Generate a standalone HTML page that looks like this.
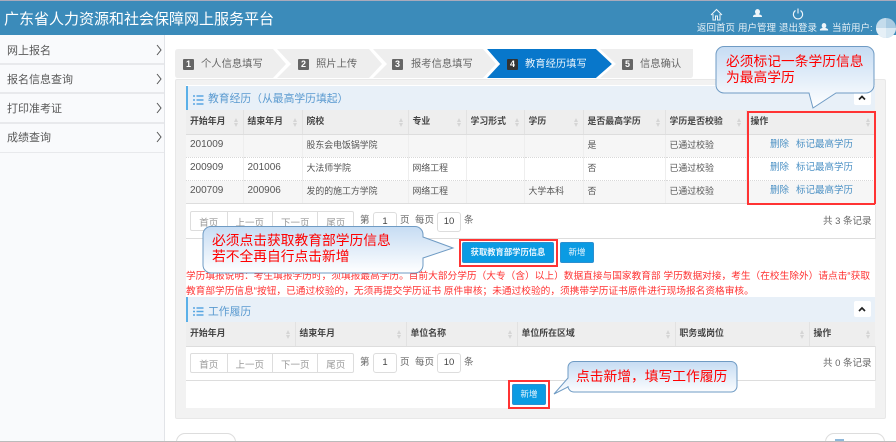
<!DOCTYPE html>
<html lang="zh-CN"><head><meta charset="utf-8"><title>广东省人力资源和社会保障网上服务平台</title>
<style>
*{box-sizing:border-box}
html,body{margin:0;padding:0;width:896px;height:442px;overflow:hidden;background:#fff}
body{position:relative;font-family:"Liberation Sans","Noto Sans CJK SC",sans-serif;color:#555}
.a{position:absolute;white-space:nowrap}
#wrap{position:absolute;left:0;top:0;width:896px;height:442px;overflow:hidden;filter:blur(.35px)}
.hd{left:0;top:1px;width:896px;height:34px;background:#3b8bba}
.ht{color:#e6f0f6;font-size:9.5px;line-height:12px;top:23px}
.side{left:0;top:35px;width:165px;height:407px;background:#f9fafc;border-right:1px solid #e2e4e8}
.sep{left:0;width:164px;background:#e8e9ec}
.si{left:7px;font-size:11px;line-height:14px;color:#585858}
.tx{font-size:10.3px;line-height:14px;color:#666;top:58px}
.bd{top:59px;width:11px;height:11px;background:#666;color:#fff;font-size:9px;font-weight:bold;line-height:11px;text-align:center;border-radius:1px}
.ph{background:#e8f0f8;border-left:2px solid #5bb0e8;left:186px;width:689px}
.pt{color:#5a9ad0;font-size:10.8px;line-height:14px;left:208px}
.col{left:854px;width:17px;height:16px;background:#fff;border-radius:2px}
table{position:absolute;left:186px;border-collapse:collapse;table-layout:fixed;font-size:8.9px;color:#555}
th{height:24px;background:#eee;text-align:left;padding:0 0 2px 4px;color:#444;font-weight:bold;border-right:1px solid #e2e2e2;border-bottom:1px solid #ddd;position:relative}
th:before,th:after{content:"";position:absolute;right:5px;border-left:2.5px solid transparent;border-right:2.5px solid transparent}
th:before{top:8px;border-bottom:4px solid #d5d5d5}
th:after{top:13px;border-top:4px solid #d5d5d5}
th:last-child{border-right:0}
td{height:23px;padding:0 0 2px 4px;border-right:1px solid #eee;border-bottom:1px dotted #d8d8d8;white-space:nowrap;overflow:hidden}
td:last-child{border-right:0}
tr.o td{background:#f6f6f6}
tr:last-child td{border-bottom:1px solid #ddd}
.n{font-size:10px;font-family:"Liberation Sans",sans-serif}
.lk{color:#4a90c4;font-size:9.5px;line-height:12px}
.pg{left:190px;width:164px;height:20px;border:1px solid #ddd;border-radius:2px;background:#fff;display:flex;font-size:9.5px;color:#999}
.pg span{display:block;text-align:center;line-height:21px;border-right:1px solid #ddd;padding-top:1px}
.pg span:last-child{border-right:0}
.pl{font-size:9.5px;line-height:12px;color:#666}
.in{width:24px;height:20px;border:1px solid #ddd;border-radius:3px;background:#fff;font-size:9.5px;color:#444;text-align:center;line-height:18px}
.hr{background:#ddd;height:1px;left:186px;width:689px}
.btn{background:#0b9be3;border:1px solid #2c8fd0;border-radius:2px;color:#eaf6fd;font-size:8.3px;line-height:19px;text-align:center;height:21px}
.rb{border:2px solid #f33}
.note{left:186px;color:#f33;font-size:9.7px;line-height:15px}
.cl{color:#f00;font-size:13.75px;line-height:16px}
svg{position:absolute;left:0;top:0}
</style></head><body><div id="wrap">

<div class="a" style="left:0;top:0;width:896px;height:1px;background:#aab"></div>
<div class="a hd"></div>
<div class="a" style="left:4px;top:10px;color:#fff;font-size:15px;line-height:20px">广东省人力资源和社会保障网上服务平台</div>

<div class="a ht" style="left:697px">返回首页</div>
<div class="a ht" style="left:738px">用户管理</div>
<div class="a ht" style="left:779px">退出登录</div>
<div class="a ht" style="left:832px">当前用户:</div>

<div class="a side"></div>
<div class="a sep" style="top:63px;height:2px"></div>
<div class="a sep" style="top:92px;height:2px"></div>
<div class="a sep" style="top:122px;height:2px"></div>
<div class="a sep" style="top:152px;height:1px"></div>
<div class="a si" style="top:44px">网上报名</div>
<div class="a si" style="top:73px">报名信息查询</div>
<div class="a si" style="top:102px">打印准考证</div>
<div class="a si" style="top:131px">成绩查询</div>

<div class="a" style="left:175px;top:79px;width:711px;height:340px;background:#f2f2f2;border:1px solid #e8e8e8;border-radius:2px"></div>
<div class="a" style="left:186px;top:85px;width:689px;height:323px;background:#fff"></div>

<div class="a" style="left:176px;top:433px;width:60px;height:12px;border:1px solid #ddd;border-radius:9px 9px 0 0;background:#fff"></div>
<div class="a" style="left:825px;top:433px;width:60px;height:12px;border:1px solid #ddd;border-radius:9px 9px 0 0;background:#fff"></div>
<div class="a" style="left:835px;top:439px;width:9px;height:2px;background:#8fb8da"></div>
<div class="a" style="left:0;top:441px;width:896px;height:1px;background:#bbb"></div>

<svg width="896" height="442" viewBox="0 0 896 442" style="z-index:1">
  <path d="M175 52q0-3 3-3H693v26q0 3-3 3H178q-3 0-3-3z" fill="#eee"/>
  <path d="M487 49H596L612 64 596 78H487L500 64z" fill="#0877cb"/>
  <path d="M273 49H277L291 64 277 78H273L286 64z" fill="#fff"/>
  <path d="M369 49H373L387 64 373 78H369L382 64z" fill="#fff"/>
  <path d="M483 49H487L500 64 487 78H483L496 64z" fill="#fff"/>
  <path d="M596 49H600L616 64 600 78H596L612 64z" fill="#fff"/>
  <path d="M157 45l4 5-4 5M157 74l4 5-4 5M157 103l4 5-4 5M157 132l4 5-4 5" fill="none" stroke="#555" stroke-width="1"/>
  <!-- header icons -->
  <path d="M711 15l5.500-5.500 5.500 5.500M713 14v6h2.500v-4h2v4H720v-6" fill="none" stroke="#eef5fa" stroke-width="1"/>
  <path d="M757.500 9a2.500 2.800 0 0 1 2.500 2.800c0 1.200-.6 2-1.200 2.500 1.600.4 3.200 1 3.200 2v.7h-9v-.7c0-1 1.600-1.600 3.200-2-.6-.5-1.200-1.300-1.200-2.500A2.500 2.800 0 0 1 757.500 9z" fill="#eef5fa"/>
  <path d="M795.500 10.500a4.600 4.600 0 1 0 5 0M798 8.500v5" fill="none" stroke="#eef5fa" stroke-width="1.100"/>
  <path d="M824 23a2.300 2.600 0 0 1 2.300 2.600c0 1-.5 1.800-1.100 2.300 1.400.4 2.900.9 2.900 1.800v.8h-8.200v-.8c0-.9 1.500-1.400 2.900-1.800-.6-.5-1.100-1.300-1.100-2.300A2.300 2.600 0 0 1 824 23z" fill="#eef5fa"/>
  <circle cx="886" cy="28" r="10" fill="#a9cbe2"/>
  <path d="M886 28V18a10 10 0 0 0-10 10z" fill="#c4dcec"/>
  <path d="M886 28h10a10 10 0 0 1-10 10z" fill="#d6e7f2"/>
  <path d="M886 28v10a10 10 0 0 1-10-10z" fill="#e6f0f7"/>
</svg>

<div class="a bd" style="left:183px;z-index:2">1</div><div class="a tx" style="left:201px;z-index:2">个人信息填写</div>
<div class="a bd" style="left:298px;z-index:2">2</div><div class="a tx" style="left:316px;z-index:2">照片上传</div>
<div class="a bd" style="left:392px;z-index:2">3</div><div class="a tx" style="left:411px;z-index:2">报考信息填写</div>
<div class="a bd" style="left:507px;z-index:2;background:#333">4</div><div class="a tx" style="left:525px;z-index:2;color:#e8f3fb">教育经历填写</div>
<div class="a bd" style="left:622px;z-index:2">5</div><div class="a tx" style="left:640px;z-index:2">信息确认</div>

<!-- Education panel -->
<div class="a ph" style="top:86px;height:24px"></div>
<div class="a pt" style="top:92px">教育经历（从最高学历填起）</div>
<svg width="896" height="442" viewBox="0 0 896 442">
  <path d="M193 96h2M196.500 96h7M193 100h2M196.500 100h7M193 104h2M196.500 104h7" stroke="#58a6e2" stroke-width="1.500" fill="none"/>
</svg>
<div class="a col" style="top:89px"></div>

<table style="top:110px;width:689px">
<colgroup><col style="width:57px"><col style="width:59px"><col style="width:106px"><col style="width:58px"><col style="width:58px"><col style="width:59px"><col style="width:82px"><col style="width:81px"><col style="width:129px"></colgroup>
<tr><th>开始年月</th><th>结束年月</th><th>院校</th><th>专业</th><th>学习形式</th><th>学历</th><th>是否最高学历</th><th>学历是否校验</th><th>操作</th></tr>
<tr class="o"><td class="n">201009</td><td></td><td>股东会电饭锅学院</td><td></td><td></td><td></td><td>是</td><td>已通过校验</td><td></td></tr>
<tr><td class="n">200909</td><td class="n">201006</td><td>大法师学院</td><td>网络工程</td><td></td><td></td><td>否</td><td>已通过校验</td><td></td></tr>
<tr class="o"><td class="n">200709</td><td class="n">200906</td><td>发的的施工方学院</td><td>网络工程</td><td></td><td>大学本科</td><td>否</td><td>已通过校验</td><td></td></tr>
</table>
<div class="a lk" style="left:770px;top:139px">删除</div><div class="a lk" style="left:796px;top:139px">标记最高学历</div>
<div class="a lk" style="left:770px;top:162px">删除</div><div class="a lk" style="left:796px;top:162px">标记最高学历</div>
<div class="a lk" style="left:770px;top:185px">删除</div><div class="a lk" style="left:796px;top:185px">标记最高学历</div>
<div class="a rb" style="left:747px;top:111px;width:129px;height:94px"></div>

<div class="a pg" style="top:211px"><span style="width:37px">首页</span><span style="width:46px">上一页</span><span style="width:46px">下一页</span><span style="width:35px">尾页</span></div>
<div class="a pl" style="left:360px;top:215px">第</div>
<div class="a in" style="left:373px;top:212px">1</div>
<div class="a pl" style="left:400px;top:215px">页</div>
<div class="a pl" style="left:415px;top:215px">每页</div>
<div class="a in" style="left:437px;top:212px">10</div>
<div class="a pl" style="left:464px;top:215px">条</div>
<div class="a pl" style="left:823px;top:216px">共 3 条记录</div>
<div class="a hr" style="top:238px"></div>
<div class="a" style="left:875px;top:204px;width:1px;height:35px;background:#e5e5e5"></div>

<div class="a rb" style="left:459px;top:239px;width:99px;height:28px"></div>
<div class="a btn" style="left:462px;top:242px;width:92px;font-weight:bold">获取教育部学历信息</div>
<div class="a btn" style="left:560px;top:242px;width:34px;font-size:8.5px">新增</div>

<div class="a note" style="top:269px">学历填报说明：考生填报学历时，须填报最高学历。目前大部分学历（大专（含）以上）数据直接与国家教育部 学历数据对接，考生（在校生除外）请点击“获取</div>
<div class="a note" style="top:284px">教育部学历信息“按钮，已通过校验的，无须再提交学历证书 原件审核；未通过校验的，须携带学历证书原件进行现场报名资格审核。</div>

<!-- Work panel -->
<div class="a ph" style="top:297px;height:25px;z-index:0"></div>
<div class="a pt" style="top:305px;z-index:1">工作履历</div>
<svg width="896" height="442" viewBox="0 0 896 442" style="z-index:1">
  <path d="M193 308h2M196.500 308h7M193 311.500h2M196.500 311.500h7M193 315h2M196.500 315h7" stroke="#58a6e2" stroke-width="1.500" fill="none"/>
</svg>
<div class="a col" style="top:301px"></div>
<table style="top:322px;width:689px">
<colgroup><col style="width:109px"><col style="width:111px"><col style="width:111px"><col style="width:158px"><col style="width:134px"><col style="width:66px"></colgroup>
<tr><th>开始年月</th><th>结束年月</th><th>单位名称</th><th>单位所在区域</th><th>职务或岗位</th><th>操作</th></tr>
</table>
<div class="a pg" style="top:353px"><span style="width:37px">首页</span><span style="width:46px">上一页</span><span style="width:46px">下一页</span><span style="width:35px">尾页</span></div>
<div class="a pl" style="left:360px;top:357px">第</div>
<div class="a in" style="left:373px;top:353px">1</div>
<div class="a pl" style="left:400px;top:357px">页</div>
<div class="a pl" style="left:415px;top:357px">每页</div>
<div class="a in" style="left:437px;top:353px">10</div>
<div class="a pl" style="left:464px;top:357px">条</div>
<div class="a pl" style="left:823px;top:358px">共 0 条记录</div>
<div class="a hr" style="top:380px"></div>
<div class="a" style="left:875px;top:346px;width:1px;height:35px;background:#e5e5e5"></div>

<div class="a rb" style="left:508px;top:380px;width:42px;height:29px"></div>
<div class="a btn" style="left:512px;top:384px;width:34px;font-size:8.5px">新增</div>

<!-- Collapse chevrons and callouts -->
<svg width="896" height="442" viewBox="0 0 896 442" style="z-index:3">
  <defs><linearGradient id="g" x1="0" y1="0" x2="0" y2="1"><stop offset="0" stop-color="#c6dcf3"/><stop offset="1" stop-color="#fff"/></linearGradient></defs>
  <path d="M859 99.500l3-3 3 3M859 311l3-3 3 3" fill="none" stroke="#222" stroke-width="1.700"/>
  <path d="M724 46.500H866a8 8 0 0 1 8 8V85a8 8 0 0 1-8 8H836L813 108 809 93H724a8 8 0 0 1-8-8V54.500a8 8 0 0 1 8-8z" fill="url(#g)" stroke="#6f9bc4"/>
  <path d="M211 226.500H415a8 8 0 0 1 8 8V237L453 248 423 258V265a8 8 0 0 1-8 8H211a8 8 0 0 1-8-8V234.500a8 8 0 0 1 8-8z" fill="url(#g)" stroke="#6f9bc4"/>
  <path d="M574 361.500H731a6 6 0 0 1 6 6V386a6 6 0 0 1-6 6H574a6 6 0 0 1-6-6V387L554 394 568 378V367.500a6 6 0 0 1 6-6z" fill="url(#g)" stroke="#6f9bc4"/>
</svg>
<div class="a cl" style="left:726px;top:54px;z-index:4">必须标记一条学历信息</div>
<div class="a cl" style="left:726px;top:70px;z-index:4">为最高学历</div>
<div class="a cl" style="left:212px;top:233px;z-index:4">必须点击获取教育部学历信息</div>
<div class="a cl" style="left:212px;top:249px;z-index:4">若不全再自行点击新增</div>
<div class="a cl" style="left:576px;top:369px;z-index:4">点击新增，填写工作履历</div>

</div></body></html>
